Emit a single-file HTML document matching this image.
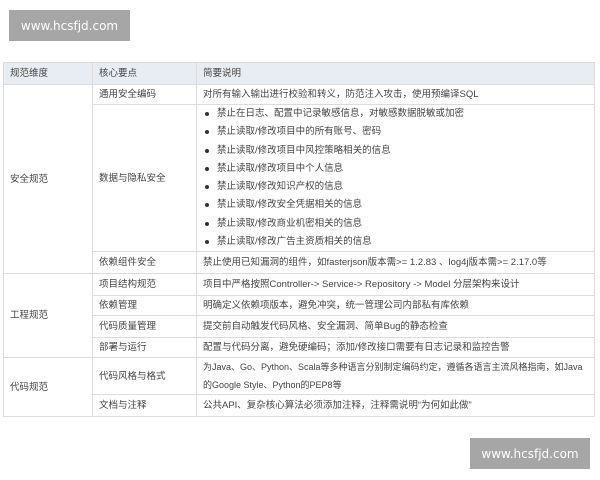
<!DOCTYPE html>
<html><head><meta charset="utf-8"><style>
body{margin:0;width:600px;height:480px;background:#fff;position:relative;overflow:hidden;font-family:"Liberation Sans","Noto Sans CJK SC",sans-serif;color:#444;font-size:9.5px}
.wm{position:absolute;background:#a6a6a6;color:#fff;font-size:12px;display:flex;align-items:center;justify-content:center;font-family:"DejaVu Sans",sans-serif}
table{position:absolute;left:3px;top:62px;width:592px;border-collapse:collapse;table-layout:fixed}
td{border:1px solid #dcdcdc;padding:0 0 0 6px;vertical-align:middle;white-space:nowrap;line-height:13px;overflow:hidden}
tr.h td{background:#e8edf4}
ul{margin:0;padding:0;list-style:none}
li{height:18.3px;line-height:18.3px;position:relative;padding-left:14px}
li:before{content:"";position:absolute;left:2px;top:7px;width:4px;height:4px;border-radius:50%;background:#333}
</style></head><body>
<div class="wm" style="left:9px;top:10px;width:121px;height:31px">www.hcsfjd.com</div>
<div class="wm" style="left:470px;top:438px;width:120px;height:31px">www.hcsfjd.com</div>
<table>
<col style="width:89px"><col style="width:104px"><col>
<tr class="h" style="height:22px"><td>规范维度</td><td>核心要点</td><td>简要说明</td></tr>
<tr style="height:20px"><td rowspan="3">安全规范</td><td>通用安全编码</td><td>对所有输入输出进行校验和转义，防范注入攻击，使用预编译SQL</td></tr>
<tr style="height:147px"><td>数据与隐私安全</td><td><ul>
<li>禁止在日志、配置中记录敏感信息，对敏感数据脱敏或加密</li>
<li>禁止读取/修改项目中的所有账号、密码</li>
<li>禁止读取/修改项目中风控策略相关的信息</li>
<li>禁止读取/修改项目中个人信息</li>
<li>禁止读取/修改知识产权的信息</li>
<li>禁止读取/修改安全凭据相关的信息</li>
<li>禁止读取/修改商业机密相关的信息</li>
<li>禁止读取/修改广告主资质相关的信息</li></ul></td></tr>
<tr style="height:22px"><td>依赖组件安全</td><td>禁止使用已知漏洞的组件，如fasterjson版本需&gt;= 1.2.83 、log4j版本需&gt;= 2.17.0等</td></tr>
<tr style="height:22px"><td rowspan="4">工程规范</td><td>项目结构规范</td><td>项目中严格按照Controller-&gt; Service-&gt; Repository -&gt; Model 分层架构来设计</td></tr>
<tr style="height:20px"><td>依赖管理</td><td>明确定义依赖项版本，避免冲突，统一管理公司内部私有库依赖</td></tr>
<tr style="height:22px"><td>代码质量管理</td><td>提交前自动触发代码风格、安全漏洞、简单Bug的静态检查</td></tr>
<tr style="height:20px"><td>部署与运行</td><td>配置与代码分离，避免硬编码；添加/修改接口需要有日志记录和监控告警</td></tr>
<tr style="height:37px"><td rowspan="2">代码规范</td><td>代码风格与格式</td><td style="line-height:18px;font-size:9px">为Java、Go、Python、Scala等多种语言分别制定编码约定，遵循各语言主流风格指南，如Java<br>的Google Style、Python的PEP8等</td></tr>
<tr style="height:22px"><td>文档与注释</td><td>公共API、复杂核心算法必须添加注释，注释需说明“为何如此做”</td></tr>
</table>
</body></html>
